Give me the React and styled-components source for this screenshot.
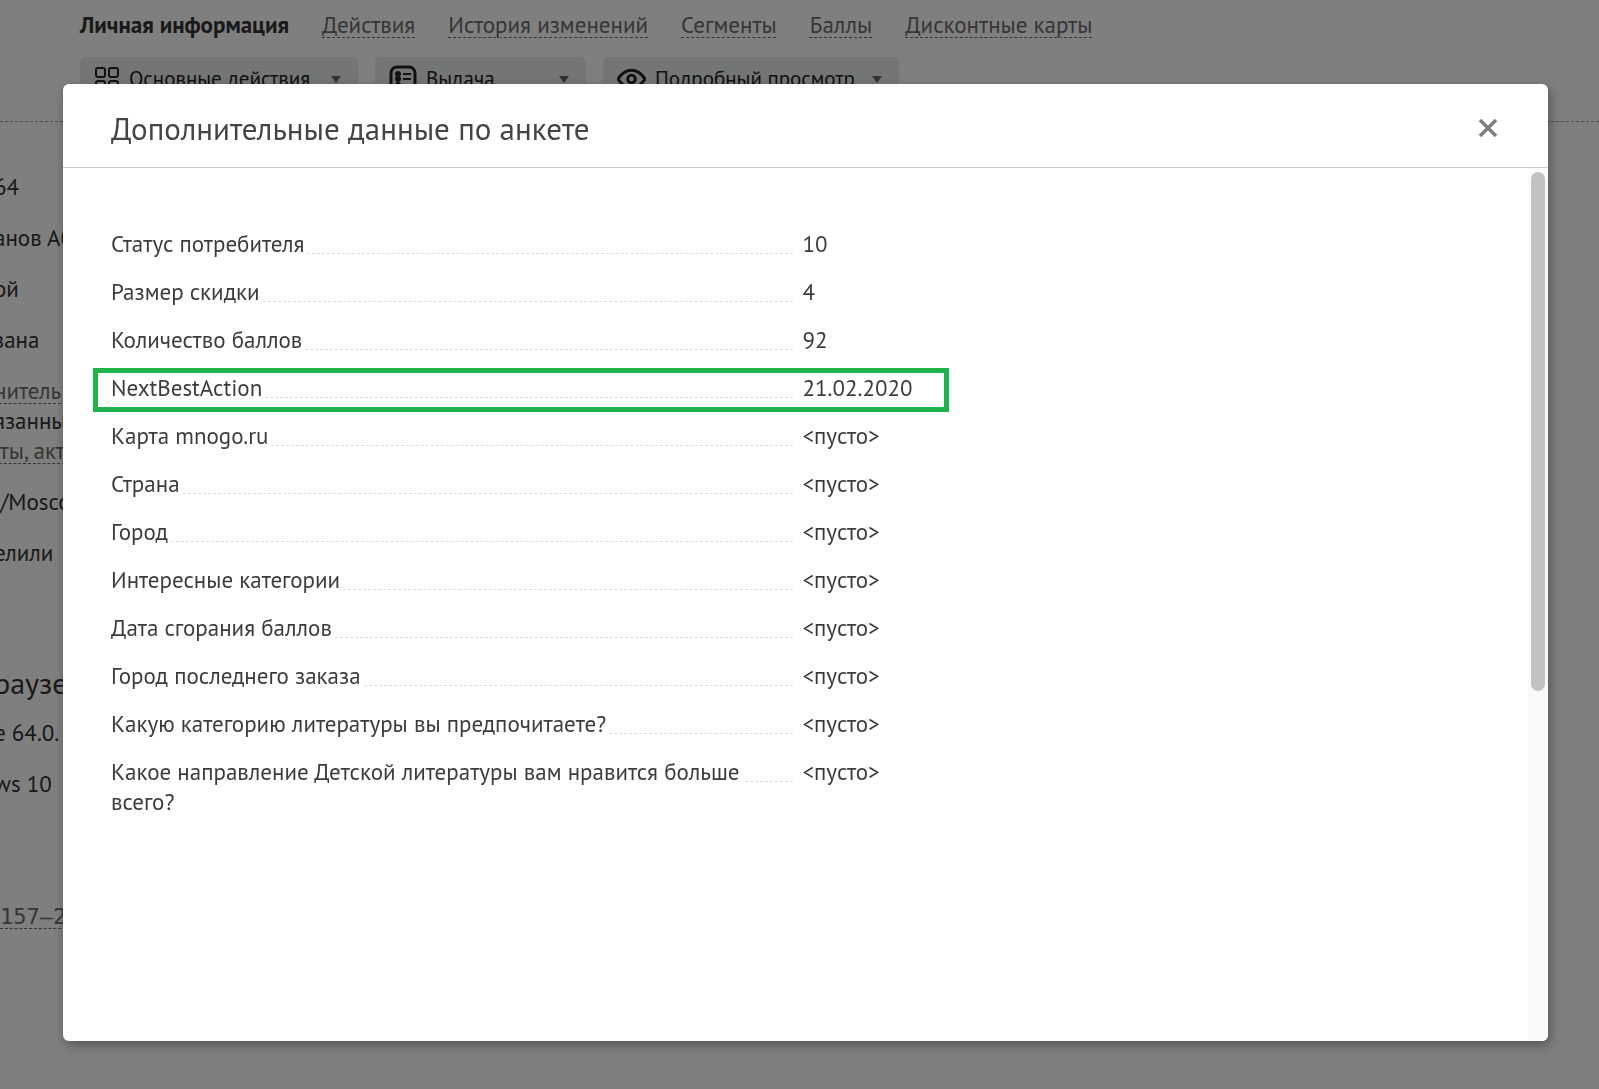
import React from "react";
import styled, { createGlobalStyle, css } from "styled-components";

const GlobalStyle = createGlobalStyle`
	* {
		box-sizing: border-box;
	}

	body {
		margin: 0;
		overflow: hidden;
		background: #fff;
		color: #333;
		font-family: "PT Sans", "Noto Sans", sans-serif;
		font-size: 23px;
		line-height: 30px;
	}
`;

const Page = styled.div`
	min-height: 100vh;
	overflow: hidden;
`;

const PageHeader = styled.header`
	padding: 10px 80px 20px;
	border-bottom: 1px dashed #999;
`;

const Tabs = styled.nav`
	display: flex;
	gap: 33px;
	white-space: nowrap;
`;

const dashed = css`
	text-decoration: underline dashed 1px;
	text-underline-offset: 4px;
`;

const Tab = styled.a`
	color: ${({ $active }) => ($active ? "#333" : "#6c6c6c")};
	font-weight: ${({ $active }) => ($active ? 700 : 400)};
	text-decoration: none;
	${({ $active }) => !$active && dashed}
`;

const Toolbar = styled.div`
	display: flex;
	gap: 17px;
	margin-top: 17px;
`;

const ToolButton = styled.button`
	display: flex;
	align-items: center;
	gap: 9px;
	width: ${({ $width }) => $width}px;
	height: 44px;
	padding: 0 17px 0 14px;
	border: 0;
	border-radius: 5px;
	background: #e9ecec;
	color: #222;
	font: inherit;
	font-size: 21px;
	white-space: nowrap;

	svg {
		flex: none;
	}
`;

const Caret = styled.span`
	margin-left: auto;
	border: 5px solid transparent;
	border-top: 7px solid #666;
	border-bottom: 0;
`;

const Profile = styled.main`
	padding-top: 50px;
	margin-left: -6px;
	white-space: pre;
`;

const Fact = styled.p`
	margin: 0 0 ${({ $tight }) => ($tight ? 0 : 21)}px;
`;

const FactLink = styled.a`
	color: #6c6c6c;
	${dashed}
`;

const BrowserTitle = styled.h2`
	margin: 100px 0 20px;
	font-size: 30px;
	font-weight: 400;
	line-height: 30px;
`;

const Phone = styled(Fact)`
	padding: 82px 0 0 6px;
	font-family: "DejaVu Sans Mono", monospace;
	font-size: 22px;
`;

const Overlay = styled.div`
	position: fixed;
	inset: 0;
	display: flex;
	padding: 84px 51px 48px 63px;
	background: rgba(0, 0, 0, 0.5);
`;

const Dialog = styled.section`
	display: flex;
	flex: 1;
	flex-direction: column;
	overflow: hidden;
	border-radius: 6px;
	background: #fff;
	box-shadow: 2px 4px 12px rgba(0, 0, 0, 0.35);
`;

const DialogHeader = styled.header`
	display: flex;
	align-items: center;
	justify-content: space-between;
	height: 84px;
	padding: 6px 48px 0;
	border-bottom: 1px solid #ccc;
`;

const DialogTitle = styled.h1`
	margin: 0;
	color: #444;
	font-size: 31px;
	font-weight: 400;
	line-height: 40px;
`;

const CloseButton = styled.button`
	display: flex;
	padding: 2px;
	border: 0;
	background: none;
	color: #808080;
`;

const DialogBody = styled.div`
	display: flex;
	flex: 1;
`;

const Content = styled.div`
	flex: 1;
	padding: 52px 48px;
`;

const Fields = styled.dl`
	width: 60%;
	margin: 0;
	color: #3c3c3c;
`;

const Field = styled.div`
	position: relative;
	display: grid;
	grid-template-columns: 21fr 4fr;
	gap: 9px;
	padding: 9px 0;

	${({ $marked }) =>
		$marked &&
		css`
			&::after {
				content: "";
				position: absolute;
				inset: 4px -17px 0 -18px;
				border: 5px solid #1fb24a;
			}
		`}
`;

const Label = styled.dt`
	display: flex;

	&::after {
		content: "";
		flex: 1 0 48px;
		height: 24px;
		margin-left: 3px;
		border-bottom: 1px dashed #ddd;
	}
`;

const Value = styled.dd`
	margin: 0;
	white-space: nowrap;
`;

const ScrollTrack = styled.div`
	width: 20px;
	padding: 4px 3px;
	background: #fafafa;
`;

const ScrollThumb = styled.div`
	width: 14px;
	height: 60%;
	border-radius: 7px;
	background: #c2c2c2;
`;

const GridIcon = () => (
	<svg width="26" height="24" viewBox="0 0 26 24" fill="none" stroke="currentColor" strokeWidth="2">
		<rect x="2" y="1" width="9" height="9" rx="2" />
		<rect x="15" y="1" width="9" height="9" rx="2" />
		<rect x="2" y="14" width="9" height="9" rx="2" />
		<rect x="15" y="14" width="9" height="9" rx="2" />
	</svg>
);

const CardIcon = () => (
	<svg width="28" height="28" viewBox="0 0 28 28" fill="none" stroke="currentColor">
		<rect x="2" y="2" width="24" height="24" rx="6" strokeWidth="3" />
		<path d="M14 9h8M14 14h8M14 20h8" strokeWidth="2" />
		<g fill="currentColor" stroke="none">
			<circle cx="9" cy="9" r="3" />
			<circle cx="9" cy="14" r="3" />
			<circle cx="9" cy="20" r="3" />
		</g>
	</svg>
);

const EyeIcon = () => (
	<svg width="29" height="22" viewBox="0 0 30 22" fill="none" stroke="currentColor" strokeWidth="3">
		<path d="M1 11C5 5 10 2 15 2s10 3 14 9c-4 6-9 9-14 9S5 17 1 11Z" />
		<circle cx="15" cy="11" r="4" />
	</svg>
);

const CloseIcon = () => (
	<svg width="20" height="20" viewBox="0 0 20 20" fill="none" stroke="currentColor" strokeWidth="3.6">
		<path d="M2 1l16 16M18 1L2 17" />
	</svg>
);

const tabs = [
	"Личная информация",
	"Действия",
	"История изменений",
	"Сегменты",
	"Баллы",
	"Дисконтные карты",
];

const tools = [
	{ name: "Основные действия", width: 278, Icon: GridIcon },
	{ name: "Выдача", width: 211, Icon: CardIcon },
	{ name: "Подробный просмотр", width: 296, Icon: EyeIcon },
];

const fields = [
	{ label: "Статус потребителя", value: "10" },
	{ label: "Размер скидки", value: "4" },
	{ label: "Количество баллов", value: "92" },
	{ label: "NextBestAction", value: "21.02.2020", marked: true },
	{ label: "Карта mnogo.ru", value: "<пусто>" },
	{ label: "Страна", value: "<пусто>" },
	{ label: "Город", value: "<пусто>" },
	{ label: "Интересные категории", value: "<пусто>" },
	{ label: "Дата сгорания баллов", value: "<пусто>" },
	{ label: "Город последнего заказа", value: "<пусто>" },
	{ label: "Какую категорию литературы вы предпочитаете?", value: "<пусто>" },
	{ label: "Какое направление Детской литературы вам нравится больше всего?", value: "<пусто>" },
];

const App = () => (
	<>
		<GlobalStyle />
		<Page>
			<PageHeader>
				<Tabs>
					{tabs.map((tab, index) => (
						<Tab key={tab} href="#" $active={index === 0}>
							{tab}
						</Tab>
					))}
				</Tabs>
				<Toolbar>
					{tools.map(({ name, width, Icon }) => (
						<ToolButton key={name} type="button" $width={width}>
							<Icon />
							{name}
							<Caret />
						</ToolButton>
					))}
				</Toolbar>
			</PageHeader>
			<Profile>
				<Fact>64</Fact>
				<Fact>анов Аб</Fact>
				<Fact>ой</Fact>
				<Fact>зана</Fact>
				<Fact $tight>
					<FactLink href="#">нитель</FactLink>
				</Fact>
				<Fact $tight>язанны</Fact>
				<Fact>
					<FactLink href="#"> ты, акт</FactLink>
				</Fact>
				<Fact> /Mosco</Fact>
				<Fact>елили</Fact>
				<BrowserTitle>раузе</BrowserTitle>
				<Fact>e 64.0.</Fact>
				<Fact>ws 10</Fact>
				<Phone>
					<FactLink href="#">157–2</FactLink>
				</Phone>
			</Profile>
		</Page>
		<Overlay>
			<Dialog role="dialog" aria-modal="true" aria-labelledby="dialog-title">
				<DialogHeader>
					<DialogTitle id="dialog-title">Дополнительные данные по анкете</DialogTitle>
					<CloseButton type="button" aria-label="Закрыть">
						<CloseIcon />
					</CloseButton>
				</DialogHeader>
				<DialogBody>
					<Content>
						<Fields>
							{fields.map(({ label, value, marked }) => (
								<Field key={label} $marked={marked}>
									<Label>{label}</Label>
									<Value>{value}</Value>
								</Field>
							))}
						</Fields>
					</Content>
					<ScrollTrack>
						<ScrollThumb />
					</ScrollTrack>
				</DialogBody>
			</Dialog>
		</Overlay>
	</>
);

export default App;
